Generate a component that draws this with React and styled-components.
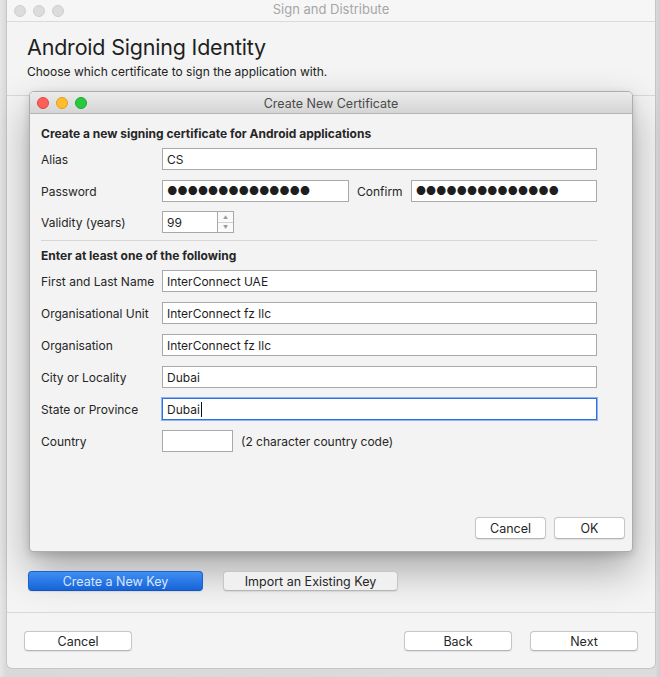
import React from "react";
import styled, { createGlobalStyle } from "styled-components";

const GlobalStyle = createGlobalStyle`
  html, body {
    margin: 0;
    padding: 0;
    background: #dedede;
  }
  body {
    font-family: "Inter", "Noto Sans", "Liberation Sans", sans-serif;
    color: #262626;
  }
  * {
    box-sizing: border-box;
  }
`;

const fields = [
  { label: "First and Last Name", value: "InterConnect UAE" },
  { label: "Organisational Unit", value: "InterConnect fz llc" },
  { label: "Organisation", value: "InterConnect fz llc" },
  { label: "City or Locality", value: "Dubai" },
  { label: "State or Province", value: "Dubai", focused: true },
];

const dots = "●●●●●●●●●●●●●●";

const TrafficLights = ({ colored }) => (
  <Lights>
    <Light $color={colored ? "#fe5f57" : "#dcdcdc"} $edge={colored ? "#e2463f" : "#cfcfcf"} />
    <Light $color={colored ? "#febc2e" : "#dcdcdc"} $edge={colored ? "#e1a116" : "#cfcfcf"} />
    <Light $color={colored ? "#28c840" : "#dcdcdc"} $edge={colored ? "#14ae2a" : "#cfcfcf"} />
  </Lights>
);

const App = () => {
  return (
    <>
      <GlobalStyle />
      <Screen>
        <Window>
          <TitleBar>
            <TrafficLights />
            <WindowTitle>Sign and Distribute</WindowTitle>
          </TitleBar>

          <Header>
            <Heading>Android Signing Identity</Heading>
            <Subtitle>Choose which certificate to sign the application with.</Subtitle>
          </Header>

          <Panel>
            <Sheet>
              <SheetTitleBar>
                <TrafficLights colored />
                <SheetTitle>Create New Certificate</SheetTitle>
              </SheetTitleBar>

              <SheetBody>
                <Form>
                  <SectionTitle>Create a new signing certificate for Android applications</SectionTitle>
                  <Row>
                    <Label>Alias</Label>
                    <Field>CS</Field>
                  </Row>
                  <Row>
                    <Label>Password</Label>
                    <Field $width="187px" $dots>{dots}</Field>
                    <InlineLabel>Confirm</InlineLabel>
                    <Field $dots>{dots}</Field>
                  </Row>
                  <Row $tight>
                    <Label>Validity (years)</Label>
                    <Field $width="56px">99</Field>
                    <Stepper>
                      <StepHalf>▲</StepHalf>
                      <StepHalf>▼</StepHalf>
                    </Stepper>
                  </Row>
                  <Divider />
                  <SectionTitle>Enter at least one of the following</SectionTitle>
                  {fields.map((f) => (
                    <Row key={f.label}>
                      <Label>{f.label}</Label>
                      <Field $focused={f.focused}>
                        {f.value}
                        {f.focused && <Caret />}
                      </Field>
                    </Row>
                  ))}
                  <Row>
                    <Label>Country</Label>
                    <Field $width="71px" />
                    <Hint>(2 character country code)</Hint>
                  </Row>
                </Form>

                <SheetActions>
                  <MacButton $width="71px">Cancel</MacButton>
                  <MacButton $width="71px">OK</MacButton>
                </SheetActions>
              </SheetBody>
            </Sheet>

            <KeyActions>
              <MacButton $primary $width="175px" $height="20px">Create a New Key</MacButton>
              <MacButton $width="175px" $height="20px" $flat>Import an Existing Key</MacButton>
            </KeyActions>
          </Panel>

          <Footer>
            <MacButton $width="108px" $height="20px">Cancel</MacButton>
            <FooterRight>
              <MacButton $width="108px" $height="20px">Back</MacButton>
              <MacButton $width="108px" $height="20px">Next</MacButton>
            </FooterRight>
          </Footer>
        </Window>
      </Screen>
    </>
  );
};

const Screen = styled.div`
  width: 660px;
  height: 677px;
  overflow: hidden;
  padding-left: 6px;
  background: linear-gradient(90deg, #e6e6e6 0, #d9d9d9 6px, #dcdcdc 655px, #cfcfcf 100%);
`;

const Window = styled.div`
  width: 650px;
  height: 669px;
  display: flex;
  flex-direction: column;
  background: #f4f4f4;
  border: 1px solid #c6c6c6;
  border-top: none;
  border-radius: 0 0 6px 6px;
`;

const TitleBar = styled.div`
  height: 22px;
  flex: none;
  display: grid;
  grid-template-columns: 1fr auto 1fr;
  align-items: center;
  padding: 0 7px;
  background: #f6f6f6;
  border-bottom: 1px solid #dadada;
`;

const Lights = styled.div`
  display: flex;
  gap: 7px;
`;

const Light = styled.span`
  width: 12px;
  height: 12px;
  border-radius: 50%;
  background: ${(p) => p.$color};
  border: 0.5px solid ${(p) => p.$edge};
`;

const WindowTitle = styled.div`
  font-size: 13px;
  color: #a6a6a6;
  text-align: center;
  margin-top: -4px;
`;

const Header = styled.div`
  padding: 12px 20px 15px;
`;

const Heading = styled.h1`
  margin: 0;
  font-size: 21.5px;
  line-height: 26px;
  font-weight: 400;
  color: #1f1f1f;
  letter-spacing: -0.2px;
`;

const Subtitle = styled.p`
  margin: 4px 0 0;
  font-size: 12px;
  line-height: 16px;
  color: #222;
`;

const Panel = styled.div`
  flex: none;
  border-top: 1px solid #d9d9d9;
`;

const Sheet = styled.div`
  width: 604px;
  height: 461px;
  margin: -5px 0 0 22px;
  display: flex;
  flex-direction: column;
  background: #f3f3f3;
  border: 1px solid #adadad;
  border-radius: 5px 5px 4px 4px;
  box-shadow: 0 18px 40px rgba(0, 0, 0, 0.32), 0 3px 8px rgba(0, 0, 0, 0.14);
`;

const SheetTitleBar = styled.div`
  height: 22px;
  flex: none;
  display: grid;
  grid-template-columns: 1fr auto 1fr;
  align-items: center;
  padding: 0 7px;
  background: linear-gradient(#ebebeb, #d5d5d5);
  border-bottom: 1px solid #b5b5b5;
  border-radius: 4px 4px 0 0;
`;

const SheetTitle = styled.div`
  font-size: 12.5px;
  color: #4a4a4a;
  text-align: center;
  margin-top: 1px;
`;

const SheetBody = styled.div`
  flex: 1;
  display: flex;
  flex-direction: column;
  padding: 12px 7px 12px 11px;
`;

const Form = styled.div`
  flex: 1;
  display: flex;
  flex-direction: column;
  gap: 10px;
  padding-right: 28px;
`;

const SectionTitle = styled.div`
  font-size: 12px;
  line-height: 16px;
  font-weight: 700;
  color: #262626;
  margin-bottom: -4px;
`;

const Row = styled.div`
  display: flex;
  align-items: center;
  height: 22px;
  margin-top: ${(p) => (p.$tight ? "-1px" : "0")};
`;

const Label = styled.div`
  width: 121px;
  flex: none;
  font-size: 12px;
  color: #262626;
`;

const InlineLabel = styled.div`
  flex: none;
  font-size: 12px;
  margin: 0 8px;
  color: #262626;
`;

const Hint = styled.div`
  font-size: 12px;
  margin-left: 8px;
  color: #262626;
`;

const Field = styled.div`
  height: 22px;
  flex: ${(p) => (p.$width ? "none" : "1")};
  width: ${(p) => p.$width || "auto"};
  display: flex;
  align-items: center;
  padding: 0 4px;
  background: #fff;
  border: 1px solid ${(p) => (p.$focused ? "#2f6fe4" : "#a9a9a9")};
  box-shadow: ${(p) => (p.$focused ? "0 0 0 1px rgba(64, 128, 238, 0.55)" : "none")};
  font-size: ${(p) => (p.$dots ? "11.5px" : "12px")};
  letter-spacing: ${(p) => (p.$dots ? "-0.3px" : "0")};
  color: #1e1e1e;
  white-space: nowrap;
  overflow: hidden;
`;

const Caret = styled.span`
  width: 1px;
  height: 15px;
  background: #111;
  margin-left: 1px;
`;

const Stepper = styled.div`
  width: 16px;
  height: 22px;
  display: flex;
  flex-direction: column;
  border: 1px solid #a9a9a9;
  border-left: none;
  background: #fafafa;
`;

const StepHalf = styled.div`
  flex: 1;
  display: flex;
  align-items: center;
  justify-content: center;
  font-size: 5px;
  color: #9a9a9a;
  & + & {
    border-top: 1px solid #d0d0d0;
  }
`;

const Divider = styled.div`
  height: 1px;
  background: #d6d6d6;
  margin: -3px 0 -3px;
`;

const SheetActions = styled.div`
  display: flex;
  justify-content: flex-end;
  gap: 8px;
`;

const MacButton = styled.button`
  width: ${(p) => p.$width};
  height: ${(p) => p.$height || "22px"};
  padding: 0;
  font-family: inherit;
  font-size: 12.5px;
  border-radius: 4px;
  color: ${(p) => (p.$primary ? "#d9e6fc" : "#262626")};
  background: ${(p) =>
    p.$primary
      ? "linear-gradient(#3f8ef3, #1764d8)"
      : p.$flat
      ? "#f0f0f0"
      : "#ffffff"};
  border: 1px solid ${(p) => (p.$primary ? "#1a62cf" : "#c6c6c6")};
  border-bottom-color: ${(p) => (p.$primary ? "#1455bd" : "#b5b5b5")};
  box-shadow: 0 0.5px 1px rgba(0, 0, 0, 0.08);
`;

const KeyActions = styled.div`
  display: flex;
  gap: 20px;
  padding: 19px 0 0 21px;
`;

const Footer = styled.div`
  margin-top: auto;
  display: flex;
  justify-content: space-between;
  padding: 18px 17px 17px 17px;
  border-top: 1px solid #d8d8d8;
`;

const FooterRight = styled.div`
  display: flex;
  gap: 18px;
`;

export default App;
